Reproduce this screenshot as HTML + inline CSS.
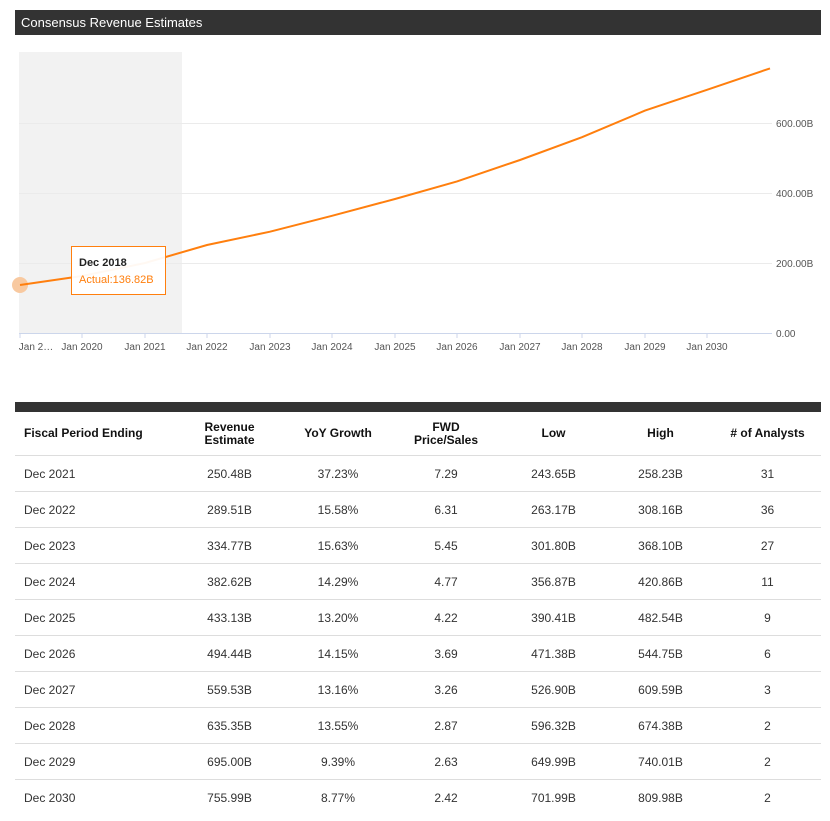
<!DOCTYPE html>
<html><head><meta charset="utf-8"><style>
body{margin:0;background:#fff;font-family:"Liberation Sans",Arial,sans-serif;}
.bar{position:absolute;left:15px;top:10px;width:806px;height:25px;background:#333;color:#fff;font-size:13px;line-height:25px;}
.bar span{padding-left:6px}
svg{position:absolute;left:0;top:0}
table{position:absolute;left:15px;top:402px;width:806px;border-collapse:collapse;table-layout:fixed;border-top:10px solid #333;font-size:12px;color:#333;}
th,td{padding:0}
th{height:43px;font-weight:bold;line-height:13px;color:#111;}
td{height:35px;border-top:1px solid #ddd;text-align:center;}
th:first-child,td:first-child{text-align:left;padding-left:9px}
</style></head><body>
<div class="bar"><span>Consensus Revenue Estimates</span></div>
<svg width="830" height="400" font-family="Liberation Sans,Arial,sans-serif">
<rect x="19" y="52" width="163" height="281" fill="#f2f2f2"/>
<g stroke="#ebebeb" stroke-width="1"><line x1="19" y1="123.5" x2="772" y2="123.5"/><line x1="19" y1="193.5" x2="772" y2="193.5"/><line x1="19" y1="263.5" x2="772" y2="263.5"/></g>
<line x1="19" y1="333.5" x2="772" y2="333.5" stroke="#ccd6eb"/>
<g stroke="#ccd6eb"><line x1="20" y1="333" x2="20" y2="338"/><line x1="82" y1="333" x2="82" y2="338"/><line x1="145" y1="333" x2="145" y2="338"/><line x1="207" y1="333" x2="207" y2="338"/><line x1="270" y1="333" x2="270" y2="338"/><line x1="332" y1="333" x2="332" y2="338"/><line x1="395" y1="333" x2="395" y2="338"/><line x1="457" y1="333" x2="457" y2="338"/><line x1="520" y1="333" x2="520" y2="338"/><line x1="582" y1="333" x2="582" y2="338"/><line x1="645" y1="333" x2="645" y2="338"/><line x1="707" y1="333" x2="707" y2="338"/></g>
<g font-size="10" fill="#555" text-anchor="middle"><text x="36" y="350">Jan 2…</text><text x="82" y="350">Jan 2020</text><text x="145" y="350">Jan 2021</text><text x="207" y="350">Jan 2022</text><text x="270" y="350">Jan 2023</text><text x="332" y="350">Jan 2024</text><text x="395" y="350">Jan 2025</text><text x="457" y="350">Jan 2026</text><text x="520" y="350">Jan 2027</text><text x="582" y="350">Jan 2028</text><text x="645" y="350">Jan 2029</text><text x="707" y="350">Jan 2030</text></g>
<g font-size="10" fill="#555"><text x="776" y="127">600.00B</text><text x="776" y="197">400.00B</text><text x="776" y="267">200.00B</text><text x="776" y="337">0.00</text></g>
<circle cx="20" cy="285" r="8" fill="#f8c9a0"/>
<polyline fill="none" stroke="#ff7f0e" stroke-width="2" points="20,285 82,276 145,263 207,245 270,231.7 332,215.8 395,199 457,181.4 520,160 582,137.2 645,110.6 707,89.8 770,68.4"/>
<rect x="71.5" y="246.5" width="94" height="48" fill="#fff" fill-opacity="0.95" stroke="#ff7f0e"/>
<text x="79" y="266" font-size="11" font-weight="bold" fill="#222">Dec 2018</text>
<text x="79" y="283" font-size="11" fill="#ff7f0e">Actual:136.82B</text>
</svg>
<table>
<colgroup><col style="width:160px"><col style="width:109px"><col style="width:108px"><col style="width:108px"><col style="width:107px"><col style="width:107px"><col style="width:107px"></colgroup>
<tr><th>Fiscal Period Ending</th><th>Revenue<br>Estimate</th><th>YoY Growth</th><th>FWD<br>Price/Sales</th><th>Low</th><th>High</th><th># of Analysts</th></tr>
<tr><td>Dec 2021</td><td>250.48B</td><td>37.23%</td><td>7.29</td><td>243.65B</td><td>258.23B</td><td>31</td></tr>
<tr><td>Dec 2022</td><td>289.51B</td><td>15.58%</td><td>6.31</td><td>263.17B</td><td>308.16B</td><td>36</td></tr>
<tr><td>Dec 2023</td><td>334.77B</td><td>15.63%</td><td>5.45</td><td>301.80B</td><td>368.10B</td><td>27</td></tr>
<tr><td>Dec 2024</td><td>382.62B</td><td>14.29%</td><td>4.77</td><td>356.87B</td><td>420.86B</td><td>11</td></tr>
<tr><td>Dec 2025</td><td>433.13B</td><td>13.20%</td><td>4.22</td><td>390.41B</td><td>482.54B</td><td>9</td></tr>
<tr><td>Dec 2026</td><td>494.44B</td><td>14.15%</td><td>3.69</td><td>471.38B</td><td>544.75B</td><td>6</td></tr>
<tr><td>Dec 2027</td><td>559.53B</td><td>13.16%</td><td>3.26</td><td>526.90B</td><td>609.59B</td><td>3</td></tr>
<tr><td>Dec 2028</td><td>635.35B</td><td>13.55%</td><td>2.87</td><td>596.32B</td><td>674.38B</td><td>2</td></tr>
<tr><td>Dec 2029</td><td>695.00B</td><td>9.39%</td><td>2.63</td><td>649.99B</td><td>740.01B</td><td>2</td></tr>
<tr><td>Dec 2030</td><td>755.99B</td><td>8.77%</td><td>2.42</td><td>701.99B</td><td>809.98B</td><td>2</td></tr>
</table>
</body></html>
